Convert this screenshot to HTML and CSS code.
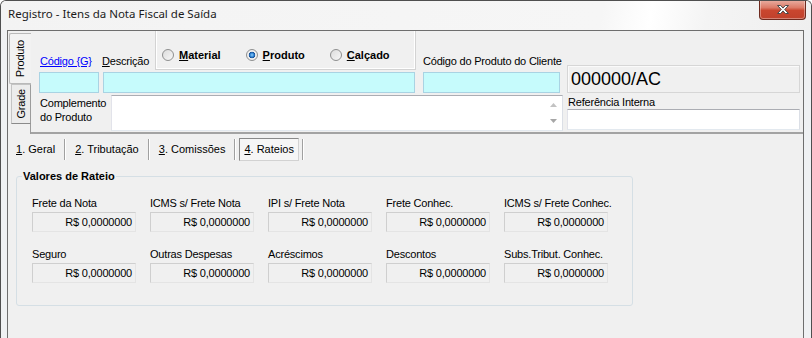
FILE: index.html
```html
<!DOCTYPE html>
<html lang="pt-BR">
<head>
    <meta charset="UTF-8" />
    <title>Registro - Itens da Nota Fiscal de Saída</title>
    <link rel="stylesheet" href="styles.css">
</head>
<body>
    <div class="window">
        <div class="titlebar">
            <span class="title">Registro - Itens da Nota Fiscal de Saída</span>
            <button class="close-btn" type="button" aria-label="Fechar">
                <svg width="14" height="11" viewBox="0 0 14 11">
                    <path d="M1.5 1.5h3.2l2.3 2.6 2.3-2.6h3.2l-3.8 4 3.8 4h-3.2l-2.3-2.6-2.3 2.6h-3.2l3.8-4z" fill="#fff" stroke="#4b4b4b" stroke-width="1" stroke-linejoin="round"/>
                </svg>
            </button>
        </div>

        <div class="frame">
            <div class="client">

                <!-- Produto / Grade page control -->
                <section class="product-box">
                    <div class="vtabs">
                        <div class="vtab active"><span class="vtext">Produto</span></div>
                        <div class="vtab"><span class="vtext">Grade</span></div>
                        <div class="vtabs-rest"></div>
                    </div>

                    <div class="product-page">
                        <div class="left-block">
                            <div class="top-row">
                                <div class="field-col col-codigo">
                                    <a class="link-label" href="#">Código {G}</a>
                                    <input class="edit cyan" type="text">
                                </div>
                                <div class="field-col col-desc">
                                    <div class="desc-head">
                                        <label class="desc-label"><u>D</u>escrição</label>
                                        <div class="type-box">
                                            <label class="radio"><input type="radio" name="tipo"><span><u>M</u>aterial</span></label>
                                            <label class="radio"><input type="radio" name="tipo" checked><span><u>P</u>roduto</span></label>
                                            <label class="radio"><input type="radio" name="tipo"><span><u>C</u>alçado</span></label>
                                        </div>
                                    </div>
                                    <input class="edit cyan" type="text">
                                </div>
                                <div class="field-col col-client">
                                    <label>Código do Produto do Cliente</label>
                                    <input class="edit cyan" type="text">
                                </div>
                            </div>
                            <div class="bottom-row">
                                <label class="compl-label">Complemento<br>do Produto</label>
                                <div class="memo">
                                    <div class="memo-scroll">
                                        <svg width="7" height="4" viewBox="0 0 7 4"><path d="M0 4L3.5 0 7 4z" fill="#c2c2c2"/></svg>
                                        <svg width="7" height="4" viewBox="0 0 7 4"><path d="M0 0h7L3.5 4z" fill="#a6a6a6"/></svg>
                                    </div>
                                </div>
                            </div>
                        </div>

                        <div class="right-block">
                            <div class="id-box">000000/AC</div>
                            <label>Referência Interna</label>
                            <input class="edit white" type="text">
                        </div>
                    </div>
                </section>

                <!-- Bottom tabs -->
                <nav class="page-tabs">
                    <a class="ptab" href="#"><u>1</u>. Geral</a><span class="psep"></span>
                    <a class="ptab" href="#"><u>2</u>. Tributação</a><span class="psep"></span>
                    <a class="ptab" href="#"><u>3</u>. Comissões</a><span class="psep"></span>
                    <a class="ptab pressed" href="#"><u>4</u>. Rateios</a><span class="psep"></span>
                </nav>

                <fieldset class="group">
                    <legend>Valores de Rateio</legend>
                    <div class="value-grid">
                        <div class="value-cell"><label>Frete da Nota</label><div class="value">R$ 0,0000000</div></div>
                        <div class="value-cell"><label>ICMS s/ Frete Nota</label><div class="value">R$ 0,0000000</div></div>
                        <div class="value-cell"><label>IPI s/ Frete Nota</label><div class="value">R$ 0,0000000</div></div>
                        <div class="value-cell"><label>Frete Conhec.</label><div class="value">R$ 0,0000000</div></div>
                        <div class="value-cell"><label>ICMS s/ Frete Conhec.</label><div class="value">R$ 0,0000000</div></div>
                        <div class="value-cell"><label>Seguro</label><div class="value">R$ 0,0000000</div></div>
                        <div class="value-cell"><label>Outras Despesas</label><div class="value">R$ 0,0000000</div></div>
                        <div class="value-cell"><label>Acréscimos</label><div class="value">R$ 0,0000000</div></div>
                        <div class="value-cell"><label>Descontos</label><div class="value">R$ 0,0000000</div></div>
                        <div class="value-cell"><label>Subs.Tribut. Conhec.</label><div class="value">R$ 0,0000000</div></div>
                    </div>
                </fieldset>

            </div>
        </div>
    </div>
</body>
</html>
```

FILE: styles.css
```css
/* Reset */
* {
    margin: 0;
    padding: 0;
    box-sizing: border-box;
}

body {
    font-family: "Liberation Sans", Arial, sans-serif;
    font-size: 11px;
    letter-spacing: -0.2px;
    color: #000;
    background: #fff;
    overflow: hidden;
}

label {
    line-height: 13px;
    white-space: nowrap;
}

/* Window frame */
.window {
    height: 338px;
    border: 1px solid #4f4f4f;
    border-bottom: none;
    border-radius: 6px 6px 0 0;
    background: #eff1f3;
    display: flex;
    flex-direction: column;
    overflow: hidden;
}

.titlebar {
    height: 29px;
    display: flex;
    align-items: flex-start;
    background: linear-gradient(100deg, #f3f3f3 0%, #f6f6f6 74%, #ffffff 80%, #f4f4f4 87%, #efefef 100%);
}

.title {
    font-family: "Noto Sans", sans-serif;
    font-size: 11.5px;
    letter-spacing: 0;
    line-height: 16px;
    color: #1b1b1b;
    padding: 5px 0 0 7px;
}

.close-btn {
    margin: -1px 5px 0 auto;
    width: 47px;
    height: 20px;
    border: 1px solid #6e2a1f;
    border-top: none;
    border-radius: 0 0 4px 4px;
    background: linear-gradient(#eab0a4 0%, #dc7b68 40%, #c9462f 55%, #c0412c 100%);
    box-shadow: inset 0 0 0 1px rgba(255, 255, 255, 0.35);
    display: flex;
    align-items: center;
    justify-content: center;
    cursor: pointer;
}

.frame {
    flex: 1;
    display: flex;
    padding: 0 7px 0 6px;
}

.client {
    flex: 1;
    border: 1px solid #6e6e6e;
    border-bottom: none;
    background: #f0f0f0;
}

/* Produto / Grade */
.product-box {
    display: flex;
    height: 103px;
}

.vtabs {
    width: 23px;
    display: flex;
    flex-direction: column;
}

.vtab {
    display: flex;
    align-items: center;
    justify-content: center;
    border: 1px solid #b9b9b9;
}

.vtab.active {
    margin: 2px 0 0 1px;
    height: 51px;
    border-right: none;
    border-radius: 2px 0 0 2px;
    background: #f2f2f2;
}

.vtab:not(.active) {
    margin: 0 0 0 3px;
    height: 40px;
    border-color: #c4c4c4 #9c9c9c #8a8a8a #c4c4c4;
    background: #ececec;
}

.vtext {
    writing-mode: vertical-rl;
    transform: rotate(180deg);
    line-height: 13px;
}

.vtabs-rest {
    flex: 1;
    border-right: 1px solid #9c9c9c;
}

.product-page {
    flex: 1;
    display: flex;
    gap: 4px;
    padding-left: 8px;
    border-bottom: 2px solid #a3a3a3;
}

.left-block {
    width: 524px;
}

.top-row {
    display: flex;
    align-items: flex-end;
}

.field-col {
    display: flex;
    flex-direction: column;
}

.field-col > label,
.link-label {
    line-height: 13px;
    margin-bottom: 4px;
    white-space: nowrap;
}

.link-label {
    color: #0000ff;
    text-decoration: underline;
    padding-left: 1px;
}

.col-codigo {
    width: 60px;
}

.col-desc {
    width: 312px;
    margin-left: 4px;
}

.col-client {
    width: 137px;
    margin-left: 8px;
}

.desc-head {
    height: 39px;
    display: flex;
    align-items: flex-end;
    margin-bottom: 2px;
}

.desc-label {
    margin: 0 0 2px -1px;
}

.type-box {
    width: 261px;
    height: 39px;
    margin: 0 -1px 0 auto;
    display: flex;
    padding: 18px 0 0 6px;
    border: 1px solid #d3d3d3;
    border-top: none;
    box-shadow: inset 1px 0 #fff, inset -1px -1px #fff;
}

.radio {
    display: flex;
    align-items: center;
    gap: 5px;
    height: 12px;
    font-weight: bold;
    letter-spacing: 0;
    margin-right: 25px;
}

.radio input {
    appearance: none;
    width: 12px;
    height: 12px;
    border-radius: 50%;
    border: 1px solid #8e8f8f;
    background: linear-gradient(135deg, #dcdcdc, #f7f7f7);
    margin: 0;
}

.radio input:checked {
    background: radial-gradient(circle, #8fd0ff 0, #2a7fd0 2px, #1b4f92 3px, #f3f3f3 3.6px, #e2e2e2 100%);
}

.edit {
    height: 21px;
    border: 1px solid #abadb3;
    font: inherit;
    outline: none;
}

.edit.cyan {
    background: #c6fbfc;
    border-color: #a9d3e3;
}

.edit.white {
    background: #fff;
    border-color: #abadb3 #dbdfe6 #e3e9ef #e2e3ea;
}

.bottom-row {
    display: flex;
    margin-top: 2px;
}

.compl-label {
    width: 72px;
    padding: 1px 0 0 1px;
    line-height: 14px;
}

.memo {
    width: 452px;
    height: 36px;
    background: #fff;
    border: 1px solid;
    border-color: #abadb3 #dbdfe6 #e3e9ef #e2e3ea;
    display: flex;
    justify-content: flex-end;
}

.memo-scroll {
    width: 17px;
    display: flex;
    flex-direction: column;
    justify-content: space-between;
    align-items: center;
    padding: 7px 0 7px;
}

.right-block {
    width: 233px;
    display: flex;
    flex-direction: column;
    padding-top: 34px;
}

.id-box {
    height: 28px;
    display: flex;
    align-items: center;
    padding: 1px 0 0 3px;
    font-size: 18px;
    letter-spacing: 0;
    background: #f0f0f0;
    border: 1px solid #d6d6d6;
    box-shadow: inset 1px 1px #fafafa;
}

.right-block label {
    margin: 3px 0 0 1px;
}

/* Bottom tab buttons */
.page-tabs {
    display: flex;
    align-items: center;
    height: 30px;
    padding: 4px 0 3px 2px;
}

.ptab {
    height: 23px;
    line-height: 21px;
    padding: 0 5px;
    border: 1px solid transparent;
    color: #000;
    letter-spacing: 0;
    text-decoration: none;
}

.ptab.pressed {
    padding: 0 4px;
    background: #f6f6f6;
    border-color: #8a8a8a #d2d2d2 #d2d2d2 #8a8a8a;
}

.psep {
    width: 2px;
    height: 21px;
    margin: 0 3px;
    border-left: 1px solid #a0a0a0;
    border-right: 1px solid #fff;
}

/* Group box */
.group {
    width: 617px;
    margin: 5px 0 0 8px;
    padding: 0 0 22px 0;
    border: 1px solid #d5dfe5;
    border-radius: 3px;
}

.group legend {
    margin-left: 5px;
    padding: 0 1px;
    font-weight: bold;
    letter-spacing: 0;
    line-height: 15px;
}

.value-grid {
    display: grid;
    grid-template-columns: repeat(5, 104px);
    column-gap: 14px;
    row-gap: 16px;
    margin: 13px 0 0 15px;
}

.value-cell {
    display: flex;
    flex-direction: column;
}

.value-cell label {
    margin-bottom: 2px;
}

.value {
    height: 20px;
    line-height: 18px;
    text-align: right;
    padding-right: 3px;
    background: #f0f0f0;
    border: 1px solid;
    border-color: #cfcfcf #e4e4e4 #e4e4e4 #cfcfcf;
    white-space: nowrap;
}
```
